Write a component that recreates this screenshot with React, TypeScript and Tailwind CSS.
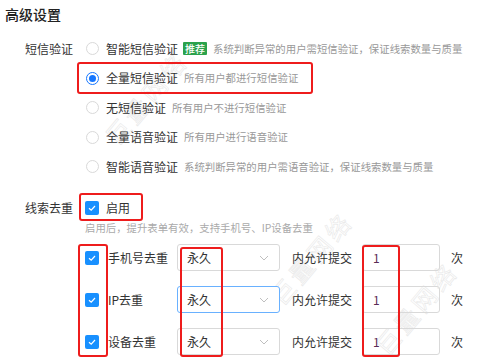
import React from "react";

const font = { fontFamily: '"Noto Sans CJK SC", "Noto Sans", sans-serif' };

function Radio({ checked }: { checked?: boolean }) {
  return checked ? (
    <span className="w-[13px] h-[13px] rounded-full border border-[#1677ff] flex items-center justify-center shrink-0">
      <span className="w-[7px] h-[7px] rounded-full bg-[#1677ff]" />
    </span>
  ) : (
    <span className="w-[13px] h-[13px] rounded-full border border-[#d9d9d9] bg-white shrink-0" />
  );
}

function Checkbox() {
  return (
    <span className="w-[14px] h-[14px] rounded-[2px] bg-[#1890ff] flex items-center justify-center shrink-0">
      <svg width="10" height="10" viewBox="0 0 10 10">
        <path d="M2 5.2 L4.2 7.2 L8 3" fill="none" stroke="#fff" strokeWidth="1.2" />
      </svg>
    </span>
  );
}

function Chevron() {
  return (
    <svg width="10" height="6" viewBox="0 0 10 6">
      <path d="M1 1 L5 5 L9 1" fill="none" stroke="#bfbfbf" strokeWidth="1" />
    </svg>
  );
}

const options = [
  { t: "智能短信验证", d: "系统判断异常的用户需短信验证，保证线索数量与质量", badge: true },
  { t: "全量短信验证", d: "所有用户都进行短信验证", checked: true },
  { t: "无短信验证", d: "所有用户不进行短信验证" },
  { t: "全量语音验证", d: "所有用户进行语音验证" },
  { t: "智能语音验证", d: "系统判断异常的用户需语音验证，保证线索数量与质量" },
];

const subs = [
  { t: "手机号去重", focus: false },
  { t: "IP去重", focus: true },
  { t: "设备去重", focus: false },
];

function Watermark({ x, y }: { x: number; y: number }) {
  return (
    <span
      className="absolute text-[24px] font-normal text-transparent [-webkit-text-stroke:0.6px_#e8e8e8] rotate-[-50deg] whitespace-nowrap pointer-events-none tracking-[4px]"
      style={{ left: x, top: y }}
      aria-hidden="true"
    >
      巨量网络
    </span>
  );
}

export default function App() {
  return (
    <div className="w-[480px] h-[360px] bg-white relative overflow-hidden text-[#333]" style={font}>
      <Watermark x={90} y={80} />
      <Watermark x={255} y={240} />
      <Watermark x={360} y={290} />

      <div className="relative pl-[5px] pt-[5px] text-[14px] leading-[18px] font-medium text-[#222]">高级设置</div>

      <div className="relative flex mt-[11px]">
        <div className="ml-[25px] w-[55px] h-[29.5px] flex items-center text-[12px]">短信验证</div>
        <div className="flex flex-col ml-[6px]">
          {options.map((o) => (
            <div key={o.t} className="h-[29.5px] flex items-center">
              <Radio checked={o.checked} />
              <span className="ml-[7px] text-[12px] text-[#333]">{o.t}</span>
              {o.badge && (
                <span className="ml-[5px] bg-[#2ba24c] text-white text-[10px] leading-[13px] px-[2px] rounded-[1px] font-medium">
                  推荐
                </span>
              )}
              <span className="ml-[6px] text-[10.4px] text-[#999]">{o.d}</span>
            </div>
          ))}
        </div>
      </div>

      <div className="relative flex mt-[12.5px] h-[28px] items-center">
        <div className="ml-[25px] w-[60px] text-[12px]">线索去重</div>
        <Checkbox />
        <span className="ml-[7px] text-[12px]">启用</span>
      </div>
      <div className="relative ml-[85px] text-[10.4px] leading-[12px] text-[#aaa]">
        启用后，提升表单有效，支持手机号、IP设备去重
      </div>

      <div className="relative flex flex-col gap-[15px] mt-[10px] ml-[85px]">
        {subs.map((s) => (
          <div key={s.t} className="flex items-center h-[27px]">
            <Checkbox />
            <span className="ml-[9px] w-[69px] text-[12px] overflow-hidden whitespace-nowrap">{s.t}</span>
            <div
              className={`w-[103px] h-[27px] rounded-[3px] border bg-white flex items-center justify-between pl-[9px] pr-[10px] text-[12px] ${
                s.focus ? "border-[#69b1ff]" : "border-[#d9d9d9]"
              }`}
            >
              <span>永久</span>
              <Chevron />
            </div>
            <span className="ml-[12px] text-[12px] w-[70px]">内允许提交</span>
            <div className="w-[78px] h-[27px] rounded-[3px] border border-[#d9d9d9] flex items-center pl-[10px] text-[12px] text-[#5a2a55]">
              1
            </div>
            <span className="ml-[11px] text-[12px]">次</span>
          </div>
        ))}
      </div>

      {/* red highlight boxes */}
      <div className="absolute left-[77px] top-[62px] w-[236px] h-[32px] border-2 border-[#ee1c1c] rounded-[3px]" />
      <div className="absolute left-[79px] top-[193px] w-[64px] h-[28px] border-2 border-[#ee1c1c] rounded-[3px]" />
      <div className="absolute left-[78px] top-[244px] w-[30px] h-[113px] border-2 border-[#ee1c1c] rounded-[3px]" />
      <div className="absolute left-[180px] top-[247px] w-[43px] h-[110px] border-2 border-[#ee1c1c] rounded-[3px]" />
      <div className="absolute left-[362px] top-[245px] w-[38px] h-[112px] border-2 border-[#ee1c1c] rounded-[3px]" />
    </div>
  );
}
